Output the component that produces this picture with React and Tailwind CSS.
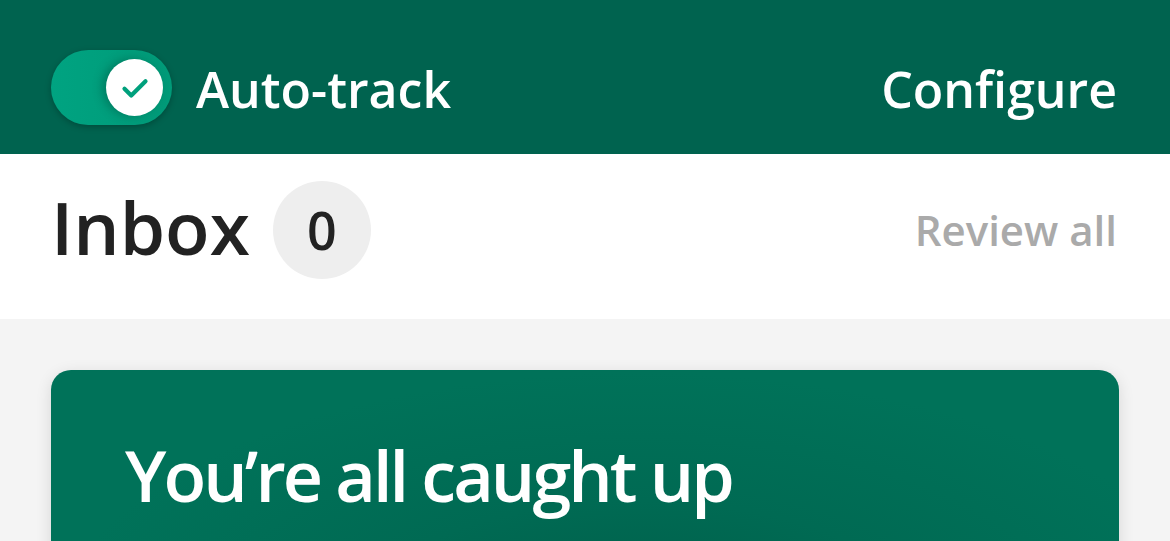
export default function App() {
  return (
    <div className="h-[541px] overflow-hidden bg-[#f4f4f4] font-['Open_Sans',sans-serif]">
      {/* Top bar */}
      <div className="h-[154px] bg-[#00634f] pl-[51px] pr-[53px] pt-[21px] flex items-center justify-between">
        <div className="flex items-center gap-[24px]">
          <div className="w-[121px] h-[75px] rounded-full bg-gradient-to-r from-[#00a381] to-[#009a78] shadow-[0_2px_6px_rgba(0,0,0,0.25)] flex items-center justify-end pr-[9px]">
            <div className="w-[57px] h-[57px] rounded-full bg-white shadow-[-4px_0_10px_rgba(0,60,45,0.35)] flex items-center justify-center">
              <svg width="36" height="36" viewBox="0 0 24 24" fill="none" stroke="#00a07c" strokeWidth="2.8" strokeLinecap="round" strokeLinejoin="round">
                <path d="M5 12.5l4.5 4.5L19 7.5" />
              </svg>
            </div>
          </div>
          <span className="text-[50px] leading-none font-semibold text-white pt-[2px]">Auto-track</span>
        </div>
        <span className="text-[50px] leading-none font-semibold text-white pt-[2px]">Configure</span>
      </div>

      {/* Inbox row */}
      <div className="h-[165px] bg-white pl-[51px] pr-[53px] pt-[27px] pb-[40px] flex items-center justify-between">
        <div className="flex items-center gap-[23px]">
          <span className="text-[73px] leading-none font-semibold text-[#222222] pb-[8px]">Inbox</span>
          <div className="w-[98px] h-[98px] rounded-full bg-[#eeeeee] flex items-center justify-center">
            <span className="text-[52px] leading-none font-semibold text-[#222222]">0</span>
          </div>
        </div>
        <span className="text-[42px] leading-none font-semibold text-[#aaaaaa]">Review all</span>
      </div>

      {/* Card */}
      <div className="px-[51px] pt-[51px]">
        <div className="h-[260px] rounded-[20px] bg-[#007259] bg-[radial-gradient(ellipse_at_55%_100%,#005d48_0%,#006a53_35%,#007259_70%)] shadow-[0_4px_16px_rgba(0,0,0,0.12)] pl-[74px] pt-[63px]">
          <h2 className="text-[70px] leading-[1.2] font-semibold tracking-[-0.042em] text-white">You’re all caught up</h2>
        </div>
      </div>
    </div>
  );
}
